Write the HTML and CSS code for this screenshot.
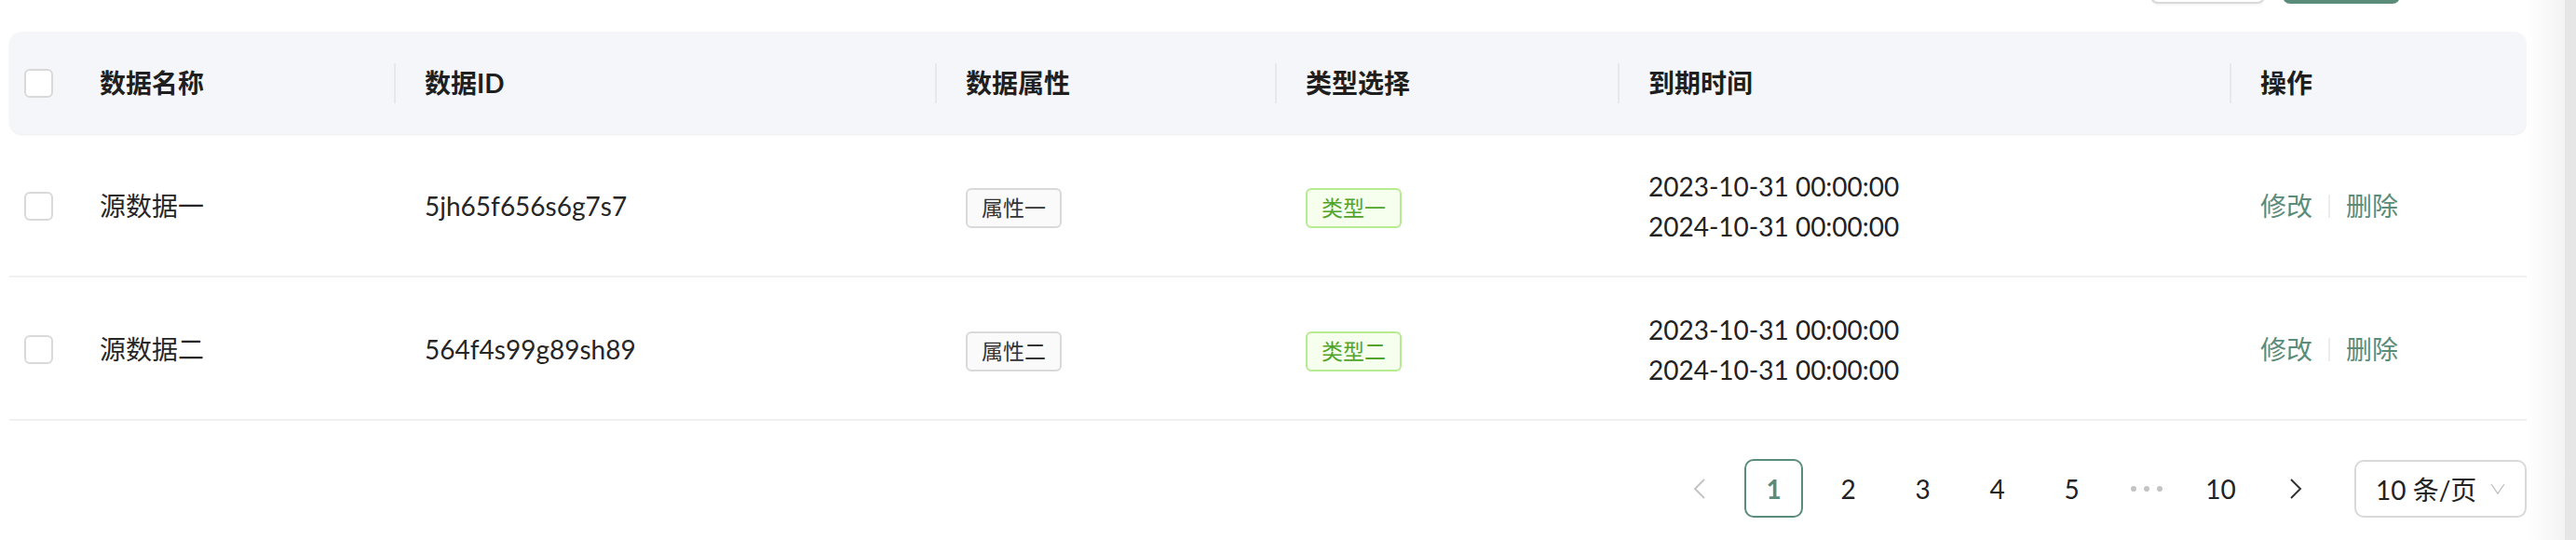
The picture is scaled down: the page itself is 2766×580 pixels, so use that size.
FILE: index.html
```html
<!DOCTYPE html>
<html lang="zh-CN">
<head>
<meta charset="utf-8">
<title>数据列表</title>
<link rel="stylesheet" href="styles.css">
</head>
<body>
<div class="main">
  <div class="toolbar">
    <button class="btn btn-default" aria-label="重置"></button>
    <button class="btn btn-primary" aria-label="查询"></button>
  </div>
  <div class="table">
    <div class="row head">
      <div class="cell c0"><span class="checkbox"></span></div>
      <div class="cell">数据名称</div>
      <div class="cell sep">数据ID</div>
      <div class="cell sep">数据属性</div>
      <div class="cell sep">类型选择</div>
      <div class="cell sep">到期时间</div>
      <div class="cell sep">操作</div>
    </div>
    <div class="row body">
      <div class="cell c0"><span class="checkbox"></span></div>
      <div class="cell">源数据一</div>
      <div class="cell">5jh65f656s6g7s7</div>
      <div class="cell"><span class="tag">属性一</span></div>
      <div class="cell"><span class="tag tag-green">类型一</span></div>
      <div class="cell dates"><span>2023-10-31 00:00:00</span><span>2024-10-31 00:00:00</span></div>
      <div class="cell actions"><a>修改</a><i class="vdiv"></i><a>删除</a></div>
    </div>
    <div class="row body">
      <div class="cell c0"><span class="checkbox"></span></div>
      <div class="cell">源数据二</div>
      <div class="cell">564f4s99g89sh89</div>
      <div class="cell"><span class="tag">属性二</span></div>
      <div class="cell"><span class="tag tag-green">类型二</span></div>
      <div class="cell dates"><span>2023-10-31 00:00:00</span><span>2024-10-31 00:00:00</span></div>
      <div class="cell actions"><a>修改</a><i class="vdiv"></i><a>删除</a></div>
    </div>
  </div>
  <div class="pager">
    <span class="pg prev"><svg width="16" height="24" viewBox="0 0 16 24"><polyline points="13,2 3,12 13,22" fill="none" stroke="currentColor" stroke-width="2"/></svg></span>
    <span class="pg active">1</span>
    <span class="pg">2</span>
    <span class="pg">3</span>
    <span class="pg">4</span>
    <span class="pg">5</span>
    <span class="pg dots"><i></i><i></i><i></i></span>
    <span class="pg">10</span>
    <span class="pg next"><svg width="16" height="24" viewBox="0 0 16 24"><polyline points="3,2 13,12 3,22" fill="none" stroke="currentColor" stroke-width="2"/></svg></span>
    <span class="size-select">10 条/页<svg width="18" height="14" viewBox="0 0 18 14"><polyline points="2,2 9,12 16,2" fill="none" stroke="currentColor" stroke-width="1.3"/></svg></span>
  </div>
</div>
<div class="edge"><div class="fade"></div><div class="bar"></div></div>
</body>
</html>
```

FILE: styles.css
```css
html, body {
  margin: 0;
  padding: 0;
  background: #fff;
}
body {
  display: flex;
  width: 2766px;
  height: 580px;
  overflow: hidden;
  font-family: Lato, "Noto Sans CJK SC", sans-serif;
  color: #262626;
}
.main {
  flex: 0 0 2713px;
  display: flex;
  flex-direction: column;
}
.edge {
  flex: 1;
  display: flex;
}
.fade {
  flex: 1;
  background: linear-gradient(to right, #ffffff, #f3f3f3);
}
.bar {
  flex: 0 0 12px;
  background: #e6e6e6;
}
.toolbar {
  height: 4px;
  display: flex;
  justify-content: flex-end;
  align-items: flex-end;
  gap: 19px;
  padding-right: 136px;
  margin-bottom: 30px;
}
.btn {
  flex: none;
  height: 56px;
  border-radius: 8px;
  box-sizing: border-box;
  padding: 0;
}
.btn-default {
  width: 123px;
  background: #fff;
  border: 2px solid #d9d9d9;
  box-shadow: 0 2px 2px rgba(0,0,0,0.04);
}
.btn-primary {
  width: 126px;
  background: #5b8c7a;
  border: 0;
}
.table {
  margin-left: 10px;
  width: 2703px;
}
.row {
  display: grid;
  grid-template-columns: 64px 349px 581px 365px 368px 657px 319px;
  align-items: center;
}
.cell {
  position: relative;
  padding-left: 33px;
  font-size: 28px;
  line-height: 43px;
  white-space: nowrap;
}
.cell.c0 {
  padding-left: 16px;
  display: flex;
  align-items: center;
}
.head {
  height: 110px;
  background: #f5f6f9;
  border-radius: 14px;
  box-shadow: 0 1px 2px rgba(0,0,0,0.08);
  font-weight: 700;
  color: #1f1f1f;
}
.head .cell.sep::before {
  content: "";
  position: absolute;
  left: 0;
  top: 0;
  width: 2px;
  height: 43px;
  background: #e7e8eb;
}
.body {
  height: 154px;
  box-sizing: border-box;
  padding-top: 3px;
  border-bottom: 2px solid #f0f0f0;
  color: #262626;
}
.checkbox {
  display: block;
  width: 31px;
  height: 31px;
  box-sizing: border-box;
  border: 2px solid #d9d9d9;
  border-radius: 6px;
  background: #fff;
}
.tag {
  display: inline-block;
  height: 43px;
  box-sizing: border-box;
  padding: 0 15px;
  border: 2px solid #d9d9d9;
  border-radius: 6px;
  background: #fafafa;
  font-size: 23px;
  line-height: 39px;
  color: #333;
  vertical-align: middle;
}
.tag-green {
  border-color: #b7eb8f;
  background: #f6ffed;
  color: #52a32a;
}
.dates {
  display: flex;
  flex-direction: column;
  color: #222;
}
.actions {
  display: flex;
  align-items: center;
}
.actions a {
  color: #5b8c7a;
}
.vdiv {
  display: block;
  width: 2px;
  height: 25px;
  margin: 0 17px;
  background: #ececec;
}
.pager {
  display: flex;
  justify-content: flex-end;
  align-items: center;
  gap: 17px;
  margin-top: 41px;
}
.pg {
  width: 63px;
  height: 63px;
  box-sizing: border-box;
  display: flex;
  align-items: center;
  justify-content: center;
  font-size: 28px;
  color: #222;
  border-radius: 10px;
}
.pg.active {
  border: 2px solid #5b8c7a;
  color: #5b8c7a;
  font-weight: 700;
}
.pg.prev {
  color: #c4c4c4;
}
.pg.next {
  color: #333;
}
.pg.dots {
  gap: 8px;
}
.pg.dots i {
  display: block;
  width: 6px;
  height: 6px;
  border-radius: 50%;
  background: #c4c4c4;
}
.size-select {
  margin-left: 15px;
  width: 185px;
  height: 62px;
  box-sizing: border-box;
  border: 2px solid #d9d9d9;
  border-radius: 10px;
  display: flex;
  align-items: center;
  padding-left: 21px;
  gap: 14px;
  font-size: 28px;
  color: #222;
}
.size-select svg {
  color: #bfbfbf;
}
```
